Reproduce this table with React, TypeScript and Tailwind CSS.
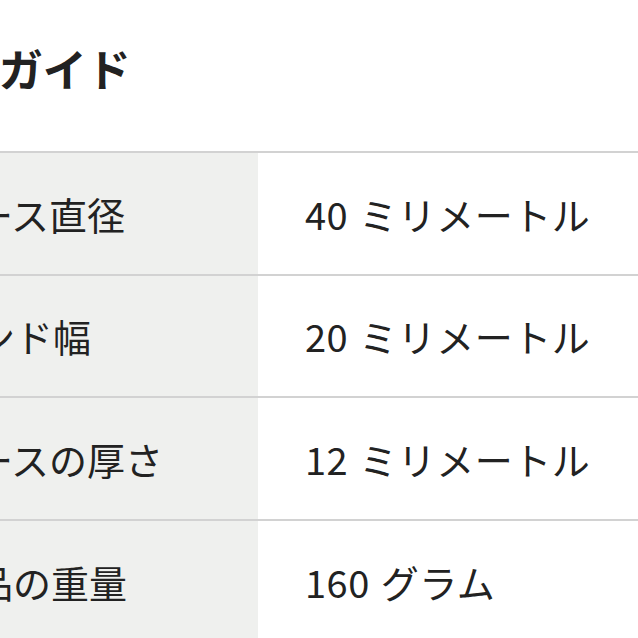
const rows = [
  { label: "ケース直径", num: "40", unit: "ミリメートル" },
  { label: "バンド幅", num: "20", unit: "ミリメートル" },
  { label: "ケースの厚さ", num: "12", unit: "ミリメートル" },
  { label: "製品の重量", num: "160", unit: "グラム" },
];

export default function App() {
  return (
    <div
      className="w-[638px] h-[638px] overflow-hidden bg-white text-[#222]"
      style={{ fontFamily: '"Noto Sans CJK JP", "Noto Sans", sans-serif' }}
    >
      <div className="ml-[-110px] w-[900px]">
        <h2 className="ml-[-22px] pt-[46px] h-[151px] text-[44px] leading-[44px] font-bold whitespace-nowrap">
          サイズガイド
        </h2>
        <div className="border-t-2 border-[#d2d2d2]">
          {rows.map((r) => (
            <div
              key={r.label}
              className="flex h-[122.6px] border-b-2 border-[#d2d2d2]"
            >
              <div className="w-[368px] shrink-0 bg-[#eff0ee] pl-[47px] flex items-center text-[38px] whitespace-nowrap">
                {r.label}
              </div>
              <div className="pl-[47px] flex items-center text-[38px] tracking-[0.5px] whitespace-nowrap">
                <span>{r.num}</span>
                <span className="ml-[11px]">{r.unit}</span>
              </div>
            </div>
          ))}
        </div>
      </div>
    </div>
  );
}
